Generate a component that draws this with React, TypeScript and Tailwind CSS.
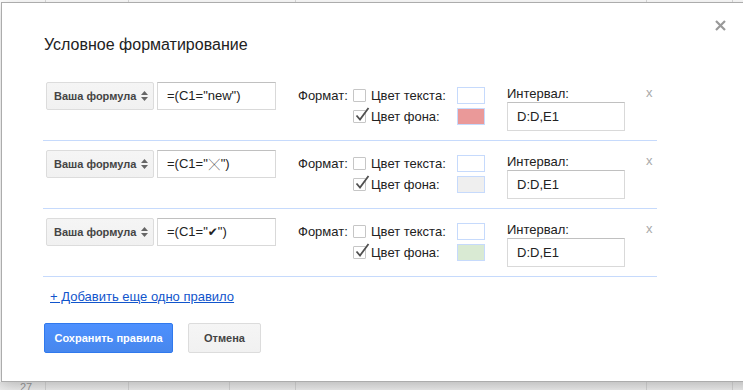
import React from "react";

const font = { fontFamily: '"Liberation Sans", Arial, sans-serif' };

function Arrows() {
  return (
    <svg width="7" height="10" viewBox="0 0 7 10">
      <path d="M0 4 L3.5 0 L7 4 Z" fill="#666" />
      <path d="M0 6 L3.5 10 L7 6 Z" fill="#666" />
    </svg>
  );
}

function Checkbox({ checked }: { checked?: boolean }) {
  return (
    <div className="relative w-[13px] h-[13px] border border-[#c6c6c6] bg-white rounded-[1px] shrink-0">
      {checked && (
        <svg
          className="absolute left-[1px] top-[-4px]"
          width="15"
          height="15"
          viewBox="0 0 15 15"
        >
          <path d="M1.5 8.5 L5 12.5 L13.5 1" fill="none" stroke="#505050" strokeWidth="1.8" />
        </svg>
      )}
    </div>
  );
}

function Rule({ formula, bg }: { formula: React.ReactNode; bg: string }) {
  return (
    <div className="flex items-start h-[68px] border-b border-[#c6dafc] w-[614px]">
      <div className="w-[255px] pl-[3px] pt-[9px] flex gap-[3px]">
        <div className="w-[108px] h-[28px] flex items-center justify-between pl-[7px] pr-[5px] border border-[#dcdcdc] rounded-[2px] bg-gradient-to-b from-[#f5f5f5] to-[#f1f1f1] text-[11px] font-bold text-[#444]">
          <span>Ваша формула</span>
          <Arrows />
        </div>
        <div className="w-[119px] h-[28px] flex items-center pl-[9px] border border-[#d9d9d9] border-t-[#c0c0c0] bg-white text-[13px] text-[#222]">
          {formula}
        </div>
      </div>
      <div className="w-[209px] pt-[12px] text-[13px] text-[#222]">
        <div className="flex items-center h-[21px]">
          <span className="w-[55px]">Формат:</span>
          <div className="w-[104px] flex items-center gap-[5px]">
            <Checkbox />
            <span>Цвет текста:</span>
          </div>
          <div className="w-[28px] h-[17px] border border-[#c6dafc] bg-white" />
        </div>
        <div className="flex items-center h-[21px]">
          <span className="w-[55px]" />
          <div className="w-[104px] flex items-center gap-[5px]">
            <Checkbox checked />
            <span>Цвет фона:</span>
          </div>
          <div className="w-[28px] h-[17px] border border-[#c6dafc]" style={{ background: bg }} />
        </div>
      </div>
      <div className="w-[139px] pt-[12px] text-[13px] text-[#222]">
        <div className="h-[17px] flex items-center">Интервал:</div>
        <div className="w-[118px] h-[29px] flex items-center pl-[9px] border border-[#d9d9d9] border-t-[#c0c0c0] bg-white">
          D:D,E1
        </div>
      </div>
      <div className="pt-[13px] text-[13px] text-[#aaa] leading-none">x</div>
    </div>
  );
}

export default function App() {
  return (
    <div className="relative w-[743px] h-[390px] overflow-hidden bg-white" style={font}>
      {/* top spreadsheet strip */}
      <div className="relative h-[2px] bg-white">
        <div className="absolute left-[45px] top-0 h-[2px] w-px bg-[#ddd]" />
        <div className="absolute left-[128px] top-0 h-[2px] w-px bg-[#ddd]" />
        <div className="absolute left-[295px] top-0 h-[2px] w-px bg-[#ddd]" />
        <div className="absolute left-[646px] top-0 h-[2px] w-px bg-[#ddd]" />
        <div className="absolute left-[732px] top-0 h-[2px] w-px bg-[#ddd]" />
      </div>

      {/* dialog */}
      <div className="relative z-10 ml-[1px] w-[780px] h-[380px] border border-[#acacac] bg-white shadow-[0_4px_16px_rgba(0,0,0,0.2)]">
        <svg className="absolute left-[713px] top-[17px]" width="11" height="11" viewBox="0 0 11 11">
          <path d="M1 1 L10 10 M10 1 L1 10" stroke="#999" strokeWidth="2.2" />
        </svg>
        <div className="pl-[41px] pt-[32px]">
          <div className="text-[16px] leading-[20px] text-[#222] pl-[1px]">Условное форматирование</div>
          <div className="mt-[18px]">
            <Rule formula={<span>=(C1="new")</span>} bg="#ea9999" />
            <Rule
              formula={
                <span className="flex items-center">
                  =(C1="
                  <span
                    className="text-[11px] leading-[11px] mx-[1px]"
                    style={{ fontFamily: '"Noto Sans CJK SC", sans-serif' }}
                  >
                    ╳
                  </span>
                  ")
                </span>
              }
              bg="#efefef"
            />
            <Rule
              formula={
                <span>
                  =(C1="<span className="text-[12px]" style={{ fontFamily: '"DejaVu Sans", sans-serif' }}>✔</span>")
                </span>
              }
              bg="#d9ead3"
            />
          </div>
          <div className="mt-[12px] pl-[7px] h-[16px] flex items-center">
            <a className="text-[13px] text-[#15c] underline cursor-pointer">+ Добавить еще одно правило</a>
          </div>
          <div className="mt-[18px] pl-[1px] flex gap-[15px]">
            <button className="w-[129px] h-[30px] rounded-[2px] border border-[#3079ed] bg-gradient-to-b from-[#4d90fe] to-[#4787ed] text-white text-[11px] font-bold">
              Сохранить правила
            </button>
            <button className="w-[73px] h-[30px] rounded-[2px] border border-[#dcdcdc] bg-gradient-to-b from-[#f5f5f5] to-[#f1f1f1] text-[#444] text-[11px] font-bold">
              Отмена
            </button>
          </div>
        </div>
      </div>

      {/* bottom spreadsheet strip */}
      <div className="relative h-[8px] bg-gradient-to-b from-[#e6e6e6] to-[#eeeeee]">
        <div className="absolute left-[20px] top-[0px] text-[11px] leading-[11px] text-[#999]">27</div>
        <div className="absolute left-[45px] top-0 h-[8px] w-px bg-[#d4d4d4]" />
        <div className="absolute left-[128px] top-0 h-[8px] w-px bg-[#d4d4d4]" />
        <div className="absolute left-[229px] top-0 h-[8px] w-px bg-[#d4d4d4]" />
        <div className="absolute left-[295px] top-0 h-[8px] w-px bg-[#d4d4d4]" />
        <div className="absolute left-[646px] top-0 h-[8px] w-px bg-[#d4d4d4]" />
        <div className="absolute left-[732px] top-0 h-[8px] w-px bg-[#d4d4d4]" />
      </div>
    </div>
  );
}
